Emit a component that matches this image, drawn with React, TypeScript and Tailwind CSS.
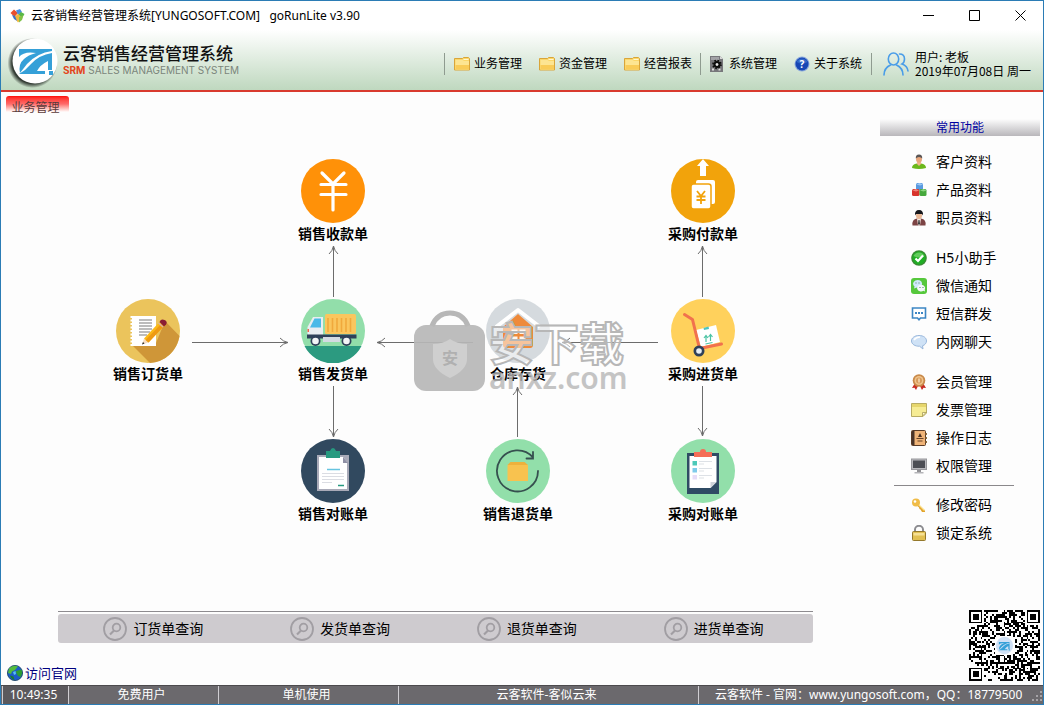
import { ReactNode } from "react";

const FLOW_NODES = [
  { label: "销售收款单", left: 282, top: 47, icon: <ReceiptIcon /> },
  { label: "采购付款单", left: 652, top: 47, icon: <PaymentIcon /> },
  { label: "销售订货单", left: 97, top: 187, icon: <OrderIcon /> },
  { label: "销售发货单", left: 282, top: 187, icon: <TruckIcon /> },
  { label: "仓库存货", left: 467, top: 187, icon: <WarehouseIcon /> },
  { label: "采购进货单", left: 652, top: 187, icon: <TrolleyIcon /> },
  { label: "销售对账单", left: 282, top: 327, icon: <SalesBillIcon /> },
  { label: "销售退货单", left: 467, top: 327, icon: <ReturnIcon /> },
  { label: "采购对账单", left: 652, top: 327, icon: <PurchaseBillIcon /> },
];

// tip position, angle of the head and length of the shaft
const ARROWS = [
  { x: 287, y: 230.5, angle: 0, length: 96 },
  { x: 376, y: 230.5, angle: 180, length: 96 },
  { x: 561, y: 230.5, angle: 180, length: 96 },
  { x: 332.5, y: 134, angle: -90, length: 51 },
  { x: 332.5, y: 325, angle: 90, length: 51 },
  { x: 516.5, y: 275, angle: -90, length: 50 },
  { x: 701.5, y: 134, angle: -90, length: 51 },
  { x: 701.5, y: 324, angle: 90, length: 50 },
];

const SHORTCUTS = [
  [
    { label: "客户资料", icon: <CustomerIcon /> },
    { label: "产品资料", icon: <ProductIcon /> },
    { label: "职员资料", icon: <StaffIcon /> },
  ],
  [
    { label: "H5小助手", icon: <CheckIcon /> },
    { label: "微信通知", icon: <WechatIcon /> },
    { label: "短信群发", icon: <SmsIcon /> },
    { label: "内网聊天", icon: <ChatIcon /> },
  ],
  [
    { label: "会员管理", icon: <MedalIcon /> },
    { label: "发票管理", icon: <NoteIcon /> },
    { label: "操作日志", icon: <BookIcon /> },
    { label: "权限管理", icon: <MonitorIcon /> },
  ],
];

const SECURITY = [
  { label: "修改密码", icon: <KeyIcon /> },
  { label: "锁定系统", icon: <LockIcon /> },
];

const QUERIES = ["订货单查询", "发货单查询", "退货单查询", "进货单查询"];

export default function App() {
  return (
    <div className="flex min-h-screen flex-col border border-[#2b7cb5] bg-[#fdfdfd] font-['Noto_Sans','Noto_Sans_CJK_SC',sans-serif] text-xs text-black">
      <TitleBar />
      <Header />
      <div className="flex flex-1">
        <main className="flex min-w-0 flex-1 flex-col">
          <div className="flex pt-1 pl-[5px]">
            <button className="h-4 w-[63px] rounded-t-[3px] bg-linear-to-b from-[#ff0000] via-[#ff6a6a] to-[#fdfdfd] pt-1 pr-1 text-center leading-4 text-[#5a3a3a]">
              业务管理
            </button>
          </div>
          <FlowChart />
          <QueryBar />
          <div className="mt-5 mb-[2px] flex h-5 items-center pl-[6px]">
            <a
              href="#site"
              className="flex items-center gap-[2px] text-[13px] leading-5 text-[#00007f]"
            >
              <GlobeIcon />
              访问官网
            </a>
          </div>
        </main>
        <Sidebar />
      </div>
      <StatusBar />
    </div>
  );
}

function TitleBar() {
  return (
    <div className="flex h-[29px] items-center bg-white pl-[9px]">
      <svg className="h-4 w-4" viewBox="0 0 16 16" aria-hidden="true">
        <path d="M0.500 5L4 1.500 8 5 4.500 9z" fill="#e8502c" />
        <path d="M6 2.500L10 1l2 3-4 3z" fill="#4a90e0" />
        <path d="M11 4l3.500 2L12 10 8 7z" fill="#58b848" />
        <path d="M4 9l4-3 4.500 4L8 14.500z" fill="#f0b83c" />
        <path d="M2 7l3 1 2 5-3-2z" fill="#3b74c8" />
        <path d="M9 9l4.500-2-1.500 5-3 2.500z" fill="#7fc24a" />
      </svg>
      <h1 className="ml-[5px] text-xs leading-5 whitespace-pre">
        云客销售经营管理系统[YUNGOSOFT.COM]{"   "}goRunLite v3.90
      </h1>
      <div className="ml-auto flex">
        <WindowButton label="最小化">
          <path d="M0 5.500h11" />
        </WindowButton>
        <WindowButton label="最大化">
          <path d="M0.500 0.500h10v10h-10z" />
        </WindowButton>
        <WindowButton label="关闭">
          <path d="M0.500 0.500l10 10M10.500 0.500l-10 10" />
        </WindowButton>
      </div>
    </div>
  );
}

function WindowButton({
  label,
  children,
}: {
  label: string;
  children: ReactNode;
}) {
  return (
    <button
      aria-label={label}
      className="flex h-[29px] w-[46px] items-center justify-center"
    >
      <svg
        className="h-[11px] w-[11px]"
        viewBox="0 0 11 11"
        fill="none"
        stroke="#000"
      >
        {children}
      </svg>
    </button>
  );
}

function Header() {
  return (
    <header className="flex h-[62px] items-center justify-between border-b-2 border-[#d93a2e] bg-linear-to-b from-white to-[#bfd8bf]">
      <div className="flex items-center">
        <svg className="h-[56px] w-[62px]" viewBox="0 0 62 56" aria-hidden="true">
          <defs>
            <radialGradient id="logo-shadow">
              <stop offset="0.82" stopColor="#2b332c" stopOpacity="0.95" />
              <stop offset="1" stopColor="#2b332c" stopOpacity="0" />
            </radialGradient>
          </defs>
          <circle cx="31.500" cy="31" r="25" fill="url(#logo-shadow)" />
          <circle cx="34" cy="29" r="22.500" fill="#fff" />
          <LogoMark />
        </svg>
        <div>
          <div className="text-[17px] leading-5 font-medium text-[#111]">
            云客销售经营管理系统
          </div>
          <div className="font-['Inter',sans-serif] text-[10px] leading-3 text-[#7b857b]">
            <b className="text-[#e2451b]">SRM</b> SALES MANAGEMENT SYSTEM
          </div>
        </div>
      </div>
      <div className="flex items-center pt-2">
        <nav className="flex items-center">
          <Separator />
          <div className="flex gap-[17px] pr-2 pl-[9px]">
            <MenuItem icon={<FolderIcon />}>业务管理</MenuItem>
            <MenuItem icon={<FolderIcon />}>资金管理</MenuItem>
            <MenuItem icon={<FolderIcon />}>经营报表</MenuItem>
          </div>
          <Separator />
          <div className="flex gap-[17px] pr-[9px] pl-2">
            <MenuItem icon={<GearIcon />}>系统管理</MenuItem>
            <MenuItem icon={<HelpIcon />}>关于系统</MenuItem>
          </div>
          <Separator />
        </nav>
        <UsersIcon />
        <div className="w-32 font-['Noto_Sans_CJK_SC',sans-serif] leading-[14px]">
          <div>用户: 老板</div>
          <div>2019年07月08日 周一</div>
        </div>
      </div>
    </header>
  );
}

function Separator() {
  return <div className="h-[22px] w-px bg-[#8f9b90]" />;
}

function MenuItem({ icon, children }: { icon: ReactNode; children: ReactNode }) {
  return (
    <button className="flex items-center gap-1 leading-5 whitespace-nowrap">
      {icon}
      {children}
    </button>
  );
}

function FlowChart() {
  return (
    <section className="relative min-h-[430px] flex-1">
      <svg
        className="absolute top-0 left-0 h-[430px] w-[760px]"
        viewBox="0 0 760 430"
        fill="none"
        stroke="#6c6c6c"
        aria-hidden="true"
      >
        {ARROWS.map(({ x, y, angle, length }) => (
          <g key={`${x}-${y}`} transform={`translate(${x} ${y}) rotate(${angle})`}>
            <path d={`M${-length} 0H0`} />
            <path d="M-8-4.500Q-5-1 0 0Q-5 1-8 4.500" />
          </g>
        ))}
      </svg>
      {FLOW_NODES.map(({ label, left, top, icon }) => (
        <button
          key={label}
          className="absolute flex w-[100px] flex-col items-center"
          style={{ left, top }}
        >
          {icon}
          <span className="text-sm leading-[22px] font-bold">{label}</span>
        </button>
      ))}
      <Watermark />
    </section>
  );
}

function Watermark() {
  return (
    <div className="pointer-events-none absolute top-[198px] left-[413px] flex">
      <svg className="h-[82px] w-[71px]" viewBox="0 0 71 82" aria-hidden="true">
        <path
          d="M18 16Q23 3 36 3t18 13"
          fill="none"
          stroke="#b7b7b7"
          strokeWidth="5"
        />
        <rect y="15" width="71" height="66" rx="12" fill="#b7b7b7" fillOpacity="0.920" />
        <path
          d="M36 29q7 5 17 5v15q0 11-17 19-17-8-17-19V34q10 0 17-5z"
          fill="#cfcfcf"
        />
        <text
          x="36"
          y="54"
          fontSize="16"
          textAnchor="middle"
          fill="#b0b0b0"
          fontWeight="700"
        >
          安
        </text>
      </svg>
      <div className="pt-3 pl-1 text-[#b7b7b7]">
        <div className="text-[45px] leading-[44px] font-bold text-white/50 [-webkit-text-stroke:2px_#b7b7b7]">
          安下载
        </div>
        <div className="text-[30px] leading-6 font-semibold opacity-80">anxz.com</div>
      </div>
    </div>
  );
}

function QueryBar() {
  return (
    <div className="mr-[67px] ml-[57px] border-t border-[#8d8b8f] pt-[2px]">
      <div className="grid h-[29px] grid-cols-4 rounded-[3px] bg-[#cecbcf] pr-1.5 pl-0.5">
        {QUERIES.map((query) => (
          <button
            key={query}
            className="flex items-center justify-center gap-[6px] text-sm leading-5"
          >
            <svg
              className="h-6 w-6"
              viewBox="0 0 24 24"
              fill="none"
              stroke="#a19ea3"
              strokeWidth="1.800"
              aria-hidden="true"
            >
              <circle cx="12" cy="12" r="11" />
              <circle cx="13.500" cy="10.500" r="3.800" />
              <path d="M11 13.500l-4 4" strokeWidth="2.200" />
            </svg>
            {query}
          </button>
        ))}
      </div>
    </div>
  );
}

function Sidebar() {
  return (
    <aside className="mr-[3px] flex w-40 flex-col pt-[27px]">
      <h2 className="h-[17px] bg-linear-to-b from-[#fdfdfd] to-[#b9b7bb] text-center text-xs leading-[17px] text-[#0000a0]">
        常用功能
      </h2>
      <nav className="mt-3 flex flex-col">
        <div className="flex flex-col gap-3">
          {SHORTCUTS.map((group) => (
            <ul key={group[0].label}>
              {group.map((item) => (
                <Shortcut key={item.label} {...item} />
              ))}
            </ul>
          ))}
        </div>
        <hr className="my-[5px] mr-[26px] ml-[14px] border-[#8a888b]" />
        <ul>
          {SECURITY.map((item) => (
            <Shortcut key={item.label} {...item} />
          ))}
        </ul>
      </nav>
      <QrCode />
    </aside>
  );
}

function Shortcut({ label, icon }: { label: string; icon: ReactNode }) {
  return (
    <li>
      <button className="flex h-7 w-full items-center gap-[9px] pl-[31px] text-sm">
        {icon}
        {label}
      </button>
    </li>
  );
}

function StatusBar() {
  return (
    <footer className="flex h-[19px] border-t border-[#4c4a4d] bg-[#6b696d] pl-px leading-[18px] whitespace-nowrap text-white">
      <StatusCell className="w-[66px] bg-[#5b595d] pr-1 text-center">10:49:35</StatusCell>
      <StatusCell className="w-[150px] pr-1 text-center">免费用户</StatusCell>
      <StatusCell className="w-[180px] pr-1 text-center">单机使用</StatusCell>
      <StatusCell className="w-[300px] pr-1 text-center">云客软件-客似云来</StatusCell>
      <StatusCell className="flex-1 pl-4">
        云客软件 - 官网：www.yungosoft.com，QQ：18779500
      </StatusCell>
      <svg className="h-[18px] w-3 self-end" viewBox="0 0 12 18" fill="#a5a3a7">
        <path d="M9 5h2v2H9zM9 9h2v2H9zM9 13h2v2H9zM5 9h2v2H5zM5 13h2v2H5zM1 13h2v2H1z" />
      </svg>
    </footer>
  );
}

function StatusCell({
  className,
  children,
}: {
  className: string;
  children: ReactNode;
}) {
  return (
    <div className={`border-l border-[#d0ced2] ${className}`}>{children}</div>
  );
}

const QR_SIZE = 37;

function inFinder(x: number, y: number) {
  return (x < 8 && y < 8) || (x >= QR_SIZE - 8 && y < 8) || (x < 8 && y >= QR_SIZE - 8);
}

function qrPath() {
  let seed = 20190708;
  let d = "";
  for (let y = 0; y < QR_SIZE; y++) {
    for (let x = 0; x < QR_SIZE; x++) {
      seed = (seed * 1103515245 + 12345) % 2147483648;
      const inAlignment = x >= 28 && x <= 32 && y >= 28 && y <= 32;
      if (inFinder(x, y) || inAlignment) continue;
      if (seed / 2147483648 < 0.5) d += `M${x} ${y}h1v1h-1z`;
    }
  }
  return d;
}

const QR_PATH = qrPath();

function QrCode() {
  return (
    <svg
      className="mt-auto mb-1 h-[71px] w-[71px] self-end"
      viewBox="0 0 37 37"
      shapeRendering="crispEdges"
      role="img"
      aria-label="二维码"
    >
      <path d={QR_PATH} />
      {[
        [0, 0],
        [30, 0],
        [0, 30],
      ].map(([x, y]) => (
        <g key={`${x}-${y}`} transform={`translate(${x} ${y})`}>
          <path d="M0 0h7v7H0zM1 1v5h5V1z" fillRule="evenodd" />
          <path d="M2 2h3v3H2z" />
        </g>
      ))}
      <path d="M28 28h5v5h-5zM29 29v3h3v-3z" fillRule="evenodd" />
      <path d="M30 30h1v1h-1z" />
      <rect x="13.500" y="13.500" width="10" height="10" rx="2" fill="#fff" />
      <circle cx="18.500" cy="18.500" r="4.500" fill="#cfe0f5" shapeRendering="auto" />
      <g
        transform="translate(12.500 13.800) scale(0.170)"
        shapeRendering="auto"
      >
        <LogoMark />
      </g>
    </svg>
  );
}

function LogoMark() {
  return (
    <g fill="#35a0d8">
      <path d="M18 17h33v2q-15 2-25 13l-7 9q-2-9 4-14 4-4 12-6-12-2-17 4z" />
      <path d="M51 21v17h-4v-9q-8 4-11 10h8v3H18q7-4 12-10 8-9 21-11z" />
      <path d="M48 39h4v4h-4z" />
    </g>
  );
}

function FolderIcon() {
  return (
    <svg className="h-4 w-4" viewBox="0 0 16 16" aria-hidden="true">
      <path
        d="M0.500 2.500h8l1-1h5l1 1v11.500h-15z"
        fill="#fbd769"
        stroke="#d9a53a"
      />
      <path d="M1.500 4h7l1.500 1h5v8.500h-13.500z" fill="#fde592" />
      <path d="M1.500 9h13.500v4.500H1.500z" fill="#f9cc58" />
      <path d="M9.500 3.500h5" stroke="#fff6d0" />
    </svg>
  );
}

function GearIcon() {
  return (
    <svg className="h-4 w-4" viewBox="0 0 16 16" aria-hidden="true">
      <path d="M1 0h10l3 3v13H1z" fill="#77777b" />
      <path d="M11 0v3h3z" fill="#d8d8d8" />
      <path d="M2 1h8v3H2z" fill="#a2a2a6" />
      <circle cx="8" cy="8.500" r="2.500" fill="none" stroke="#0c0c0c" strokeWidth="2.200" />
      <circle
        cx="8"
        cy="8.500"
        r="4"
        fill="none"
        stroke="#0c0c0c"
        strokeWidth="1.600"
        strokeDasharray="1.600 1.540"
      />
      <circle cx="8" cy="8.500" r="1.300" fill="#e8e8e8" />
      <path d="M3 12.500h2v2H3zM9.500 12.500h2v2h-2z" fill="#e0e0e0" />
    </svg>
  );
}

function HelpIcon() {
  return (
    <svg className="h-4 w-4" viewBox="0 0 16 16" aria-hidden="true">
      <circle cx="8" cy="8" r="7.500" fill="#8aa8dc" />
      <circle cx="8" cy="8" r="6.500" fill="#1646b4" />
      <path d="M2.500 6a6 6 0 0 1 11 0q-5 3-11 0z" fill="#3468c8" />
      <text x="8" y="12" fontSize="10" fontWeight="700" textAnchor="middle" fill="#fff">
        ?
      </text>
    </svg>
  );
}

function UsersIcon() {
  return (
    <svg
      className="mr-[6px] ml-[11px] h-[26px] w-[26px]"
      viewBox="0 0 26 26"
      fill="none"
      stroke="#4a9de8"
      strokeWidth="1.600"
      strokeLinecap="round"
      aria-hidden="true"
    >
      <ellipse cx="10.500" cy="8" rx="5.200" ry="6" />
      <path d="M1 24q0-7 6.500-10M13.500 14q6.500 3 6.500 10" />
      <path d="M16.500 3q5 0 5 5 0 3.500-2.500 5 5.500 2 6 7" />
    </svg>
  );
}

function Disc({ color, children }: { color: string; children: ReactNode }) {
  return (
    <svg className="h-16 w-16" viewBox="0 0 64 64" aria-hidden="true">
      <circle cx="32" cy="32" r="32" fill={color} />
      {children}
    </svg>
  );
}

function ReceiptIcon() {
  return (
    <Disc color="#ff9108">
      <path
        d="M21 14l11 11 11-11M32 25v26M20 25.500h25M20 35.500h25"
        fill="none"
        stroke="#fff"
        strokeWidth="3.200"
        strokeLinecap="round"
      />
    </Disc>
  );
}

function PaymentIcon() {
  return (
    <Disc color="#f2a30b">
      <path d="M32 0l6 7h-3v10h-6V7h-3z" fill="#fff" />
      <rect x="25" y="21" width="19" height="24" rx="2" fill="#fff" />
      <rect
        x="20"
        y="25"
        width="20"
        height="25"
        rx="2.500"
        fill="#fff"
        stroke="#f2a30b"
        strokeWidth="1.500"
      />
      <path
        d="M26 32l4 5 4-5M30 37v8M25.500 37.500h9M25.500 41h9"
        fill="none"
        stroke="#f2a30b"
        strokeWidth="1.800"
      />
    </Disc>
  );
}

function OrderIcon() {
  return (
    <Disc color="#ebc45c">
      <path d="M17 47l17 17a32 32 0 0 0 29.500-27L49 22 40 44z" fill="#cf9638" />
      <path d="M16 17h24v30H16z" fill="#fff" />
      <path d="M16 17v30" stroke="#fff" strokeWidth="3" strokeDasharray="2 1.500" />
      <path
        d="M23 21h13M23 24h13M23 27h13M23 30h13M23 33h11M23 36h8"
        stroke="#a7a7a7"
        strokeWidth="1.300"
      />
      <path d="M26 45.500l2-6 4.500 4z" fill="#f6dcc0" />
      <path d="M26 45.500l1-2.500 1.500 1.500z" fill="#222" />
      <path d="M28 39.500L43.500 23l4.500 4-15.500 16.500z" fill="#fbb917" />
      <path d="M29.500 41L45.500 24.500l2.500 2.500-15.500 16.500z" fill="#ee9a12" />
      <path d="M43.500 23q1.500-3.500 5-2t1.500 4.500l-2 2z" fill="#8b1d34" />
      <path d="M42.500 24l4.500 4" stroke="#d8b4a8" strokeWidth="1.300" />
    </Disc>
  );
}

function TruckIcon() {
  return (
    <Disc color="#92deaa">
      <path d="M3.500 47h57a32 32 0 0 1-57 0z" fill="#2c9a80" />
      <rect x="24" y="15" width="31" height="20" rx="1.500" fill="#fac65e" />
      <path
        d="M27 19v14M31.500 19v14M36 19v14M40.500 19v14M45 19v14M49.500 19v14"
        stroke="#f0a93c"
        strokeWidth="1.600"
      />
      <path d="M12 18h10v18H6.500v-8z" fill="#e9edf1" />
      <path d="M13.500 19.500h6.500v9H9z" fill="#4ab9e8" />
      <path d="M6.500 30h1.500v3H6.500z" fill="#f0644c" />
      <path d="M6 35.500h49.500v4H6z" fill="#2f4059" />
      <path d="M22 38h17v5H22z" fill="#d3dae2" />
      <circle cx="14.500" cy="42" r="5" fill="#2f4059" />
      <circle cx="14.500" cy="42" r="3.300" fill="#f3f4f6" />
      <circle cx="45.500" cy="42" r="5" fill="#2f4059" />
      <circle cx="45.500" cy="42" r="3.300" fill="#f3f4f6" />
    </Disc>
  );
}

function WarehouseIcon() {
  return (
    <Disc color="#d5dade">
      <path d="M32 15l15 13v18q0 3-3 3H20q-3 0-3-3V28z" fill="#ee8a3a" />
      <path
        d="M10 28l22-17 22 17"
        fill="none"
        stroke="#fff"
        strokeWidth="4"
        strokeLinejoin="round"
      />
      <path
        d="M25.500 30.500h6v4.500h-6zM33.500 30.500h6v4.500h-6zM25.500 37.500h6V42h-6zM33.500 37.500h6V42h-6z"
        fill="#fff"
        fillOpacity="0.900"
      />
    </Disc>
  );
}

function TrolleyIcon() {
  return (
    <Disc color="#ffd15c">
      <path d="M25 31l20-5 4 17-19 5z" fill="#fff" />
      <path d="M32.500 29l5-1.500.5 2.500-5 1z" fill="#4cc4c0" />
      <path
        d="M35 43v-6M33 39l2-2.500 2 2.500M39.500 42v-6M37.500 38l2-2.500 2 2.500M34.500 45l7-1.500"
        fill="none"
        stroke="#4cc4a4"
        strokeWidth="1.200"
      />
      <path
        d="M13.500 15.500l8 5 7 29 22-4.500"
        fill="none"
        stroke="#f1714d"
        strokeWidth="3"
        strokeLinecap="round"
        strokeLinejoin="round"
      />
      <circle cx="28" cy="52" r="5.500" fill="#2f4059" />
      <circle cx="28" cy="52" r="2.800" fill="#e6edf5" />
    </Disc>
  );
}

function SalesBillIcon() {
  return (
    <Disc color="#31495f">
      <path d="M16 16h32v36H16z" fill="#a9aab8" />
      <path d="M18 18h24l4 5v27H18z" fill="#fff" />
      <path d="M42 18v6h5z" fill="#8f90a5" />
      <path d="M25 12h4q1-3 3-3t3 3h4v7H25z" fill="#279a80" />
      <path d="M26 30.500h13" stroke="#67c4e0" strokeWidth="1.500" />
      <path
        d="M21 34.500h22M21 37.500h22M21 40.500h22M21 43.500h10"
        stroke="#dbdde3"
        strokeWidth="1.100"
      />
      <path d="M37 46.500h6" stroke="#279a80" strokeWidth="1.500" />
    </Disc>
  );
}

function ReturnIcon() {
  return (
    <Disc color="#92dfaa">
      <path
        d="M52 32a20.500 20.500 0 1 1-5-13.500M47 13v6.500h-6.500"
        fill="none"
        stroke="#36504f"
        strokeWidth="1.800"
        strokeLinecap="round"
      />
      <path d="M21.500 26h20.500v16H21.500z" fill="#f8c24f" />
      <path d="M21.500 26l3-3h14l3.500 3z" fill="#eeb13c" />
    </Disc>
  );
}

function PurchaseBillIcon() {
  return (
    <Disc color="#92dfaa">
      <path d="M16 14h32v41H16z" fill="#2f4b64" />
      <path d="M18.500 17h27v26l-6 6h-21z" fill="#fff" />
      <path d="M39.500 49v-6h6z" fill="#cfd4da" />
      <path d="M23 13h6q0-3 3-3t3 3h6v5H23z" fill="#f56e57" />
      <path d="M21.500 22h4.500v4.500h-4.500z" fill="#4cc9b8" />
      <path d="M21.500 29h4.500v4.500h-4.500z" fill="#7fcbea" />
      <path d="M21.500 36h4.500v4.500h-4.500z" fill="#e6dcf8" />
      <path
        d="M28 22.500h13M28 25h5M28 29.500h13M28 32h5M28 36.500h13M28 39h5"
        stroke="#dde1e6"
        strokeWidth="1.100"
      />
    </Disc>
  );
}

function SmallIcon({ children }: { children: ReactNode }) {
  return (
    <svg className="h-4 w-4" viewBox="0 0 16 16" aria-hidden="true">
      {children}
    </svg>
  );
}

function CustomerIcon() {
  return (
    <SmallIcon>
      <path d="M1 14q0-4 5-4.500h4q5 .5 5 4.500-7 2-14 0z" fill="#6cb81c" />
      <path d="M5.500 9.500L8 12l2.500-2.500-1-2h-3z" fill="#f0b48c" />
      <ellipse cx="8" cy="5" rx="3" ry="3.800" fill="#e8a67c" />
      <path d="M4.800 4.500Q4.500.5 8 .5t3.200 4Q10 3 8 3T4.800 4.500z" fill="#5a5656" />
    </SmallIcon>
  );
}

function ProductIcon() {
  return (
    <SmallIcon>
      <rect x="5" y="1" width="7" height="7" rx="1.500" fill="#5a9ae0" />
      <path d="M5.500 2.500l3.500 1 3-1-3.500-1.500z" fill="#9cc8f4" />
      <rect x="1" y="7" width="7.500" height="7" rx="1.500" fill="#d8342c" />
      <path d="M1.500 8.500l3.500 1 3-1-3-1.500z" fill="#f0847c" />
      <rect x="8.500" y="7" width="7" height="7" rx="1.500" fill="#46a83c" />
      <path d="M9 8.500l3.500 1 3-1-3-1.500z" fill="#8cd680" />
    </SmallIcon>
  );
}

function StaffIcon() {
  return (
    <SmallIcon>
      <path d="M1.500 15.500q-1-6 4.500-7h4q5.500 1 4.500 7z" fill="#7c4444" />
      <path d="M6 8.500h4L9 15.500H7z" fill="#f2e6e0" />
      <path d="M7.500 10h1l.5 4-1 1-1-1z" fill="#333" />
      <ellipse cx="8" cy="5.500" rx="3" ry="3.500" fill="#eab896" />
      <path d="M4 5.500Q3.500 0 8 0t4 5.500L11 4H5z" fill="#16161a" />
    </SmallIcon>
  );
}

function CheckIcon() {
  return (
    <SmallIcon>
      <circle cx="8" cy="8" r="7.800" fill="#3a8a34" />
      <circle cx="8" cy="8" r="6.500" fill="#1fae24" />
      <path d="M2.500 6a6 6 0 0 1 11 0q-5 3-11 0z" fill="#62cc5c" />
      <path d="M4.500 8.500l2.500 2.500 5-5.500" fill="none" stroke="#fff" strokeWidth="2.200" />
    </SmallIcon>
  );
}

function WechatIcon() {
  return (
    <SmallIcon>
      <rect width="16" height="16" rx="3" fill="#56c83c" />
      <path d="M3 10.500l.5-2A4.500 3.800 0 1 1 6 9.500z" fill="#cfe8fb" />
      <path d="M14 13.500l-1.500-.8a4 3.300 0 1 1 1.200-1.200z" fill="#f4f8fc" />
      <path d="M4.500 4.500h1v1h-1zM7.500 4.500h1v1h-1zM8.500 9h1v1h-1zM11.500 9h1v1h-1z" fill="#48805a" />
    </SmallIcon>
  );
}

function SmsIcon() {
  return (
    <SmallIcon>
      <path
        d="M1.500 2h13v10H9.500L8 13.800 6.500 12h-5z"
        fill="#fff"
        stroke="#3c86c4"
        strokeWidth="1.600"
      />
      <path d="M4 6h2v2H4zM7 6h2v2H7zM10 6h2v2h-2z" fill="#3c86c4" />
    </SmallIcon>
  );
}

function ChatIcon() {
  return (
    <SmallIcon>
      <path
        d="M8 1.500c4.500 0 7.500 2.300 7.500 5.500 0 2-1.500 4-4 4.800L12 15l-3.500-2.800C4 12.500.5 10 .5 7S3.500 1.500 8 1.500z"
        fill="#cfe2f6"
        stroke="#9ab8dc"
      />
      <path d="M3 6Q5 3 9 3" fill="none" stroke="#fff" strokeWidth="1.500" />
    </SmallIcon>
  );
}

function MedalIcon() {
  return (
    <SmallIcon>
      <path d="M4 9l-3 5 2.500-.3L5 16l2.500-5zM12 9l3 5-2.500-.3L11 16l-2.500-5z" fill="#c82c24" />
      <circle cx="8" cy="6.500" r="6.300" fill="#c98a4a" />
      <circle cx="8" cy="6.500" r="4.500" fill="#f0c48c" />
      <circle cx="8" cy="6.500" r="3" fill="#d89c5c" />
      <path d="M8 4.500v4" stroke="#fbe6c4" strokeWidth="1.300" />
    </SmallIcon>
  );
}

function NoteIcon() {
  return (
    <SmallIcon>
      <path d="M.5 1.500h15v9.500l-3.500 3.500H.5z" fill="#f6ec94" stroke="#b8ac64" />
      <path d="M1 2h14v3H1z" fill="#e6d66c" />
      <path d="M11.500 14v-3.500H15z" fill="#fffbd8" stroke="#a89c58" strokeWidth="0.800" />
    </SmallIcon>
  );
}

function BookIcon() {
  return (
    <SmallIcon>
      <rect x=".5" y=".5" width="14" height="15" rx="1" fill="#f0b478" stroke="#5a3c28" />
      <path d="M1 1h2.500v14H1z" fill="#4a3428" />
      <path d="M14.500 3H16v2h-1.500zM14.500 7H16v2h-1.500zM14.500 11H16v2h-1.500z" fill="#8c6c3c" />
      <path d="M9 3l2 4H7z" fill="#4a3020" />
      <path d="M5.500 8.500h7M6.500 11h5" stroke="#6a4428" />
    </SmallIcon>
  );
}

function MonitorIcon() {
  return (
    <SmallIcon>
      <rect x=".5" y="1" width="15" height="10.500" fill="#b8b8bc" stroke="#98989c" />
      <rect x="2" y="2.500" width="12" height="7.500" fill="#4c4e54" />
      <path d="M6 12h4v2H6z" fill="#909094" />
      <path d="M3.500 14h9v1.500h-9z" fill="#b4b4b8" />
    </SmallIcon>
  );
}

function KeyIcon() {
  return (
    <SmallIcon>
      <path d="M7 7l7 6.500V15h-3l-1.500-2.500-1-.5-.5-1.500-2-2z" fill="#e2a42c" />
      <circle cx="5" cy="5.500" r="4" fill="#f0bc48" />
      <path d="M8 8l5.500 5.500" stroke="#fbe08c" strokeWidth="1.200" />
      <circle cx="4" cy="4.500" r="1.300" fill="#fff" />
    </SmallIcon>
  );
}

function LockIcon() {
  return (
    <SmallIcon>
      <path d="M4 7.500V4.500a4 3.700 0 0 1 8 0v3" fill="none" stroke="#8c8c90" strokeWidth="2" />
      <rect x="1.500" y="6.500" width="13" height="9" rx="1" fill="#e2c052" stroke="#94782c" />
      <path d="M2.500 8h11v2.500h-11z" fill="#f6e094" />
    </SmallIcon>
  );
}

function GlobeIcon() {
  return (
    <SmallIcon>
      <circle cx="8" cy="8" r="7.600" fill="#1c5cc8" stroke="#123c5c" strokeWidth="0.800" />
      <path d="M2 3.500Q6-.5 11 1.500L8 5 5 6.500 4 9 1 8z" fill="#54bc3c" />
      <path d="M9 6l5.500-1.500q1.500 4-1 7.500L11 11 9.500 8.500z" fill="#2c9c34" />
      <path d="M3 10.500l3.500 1 1 3.500Q4 14 3 10.500z" fill="#1c7c2c" />
      <path d="M6 7l2.500-1 .5 3-2 1z" fill="#58c0f0" />
    </SmallIcon>
  );
}
